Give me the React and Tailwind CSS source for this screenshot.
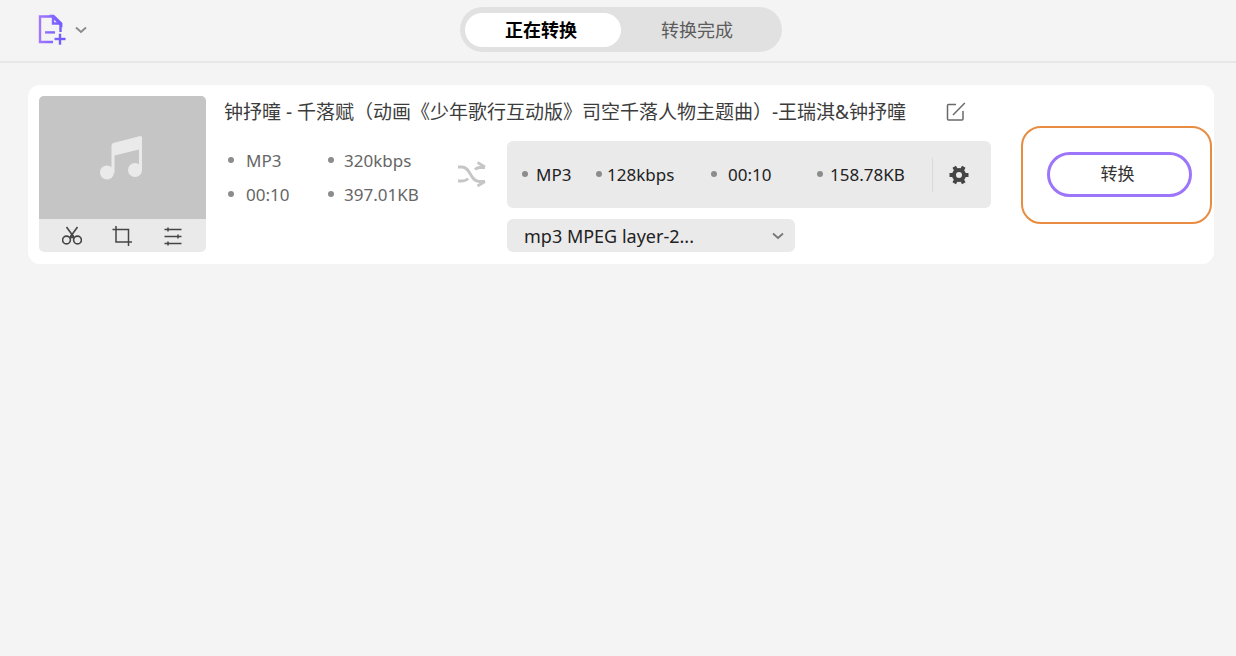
import React, { useState } from 'react';
import clsx from 'clsx';

const tabs = ['正在转换', '转换完成'];

const source = [
  { value: 'MP3', gap: 'gap-3' },
  { value: '320kbps', gap: 'gap-[10px]' },
  { value: '00:10', gap: 'gap-3' },
  { value: '397.01KB', gap: 'gap-[10px]' },
];

const target = [
  { value: 'MP3', gap: 'gap-2' },
  { value: '128kbps', gap: 'gap-[5px]' },
  { value: '00:10', gap: 'gap-[11px]' },
  { value: '158.78KB', gap: 'gap-[7px]' },
];

const App = () => {
  const [activeTab, setActiveTab] = useState(tabs[0]);

  return (
    <div className="min-h-screen bg-[#f4f4f4] font-['Noto_Sans','Noto_Sans_CJK_SC',sans-serif]">
      {/* Top bar */}
      <header className="grid h-[63px] grid-cols-[1fr_auto_1fr] items-start border-b-2 border-[#e7e7e7] px-[38px]">
        <button type="button" aria-label="添加文件" className="mt-[14px] flex items-center gap-2 justify-self-start">
          <AddFileIcon />
          <ChevronIcon className="text-[#8a8a8a]" />
        </button>
        <nav className="mt-[7px] ml-[6px] flex h-[45px] items-center rounded-full bg-[#e1e1e1] px-[5px]">
          {tabs.map((tab) => (
            <button
              key={tab}
              type="button"
              onClick={() => setActiveTab(tab)}
              className={clsx(
                'h-[34px] w-[156px] rounded-full pr-1 text-lg leading-[34px]',
                tab === activeTab ? 'bg-white font-bold text-black' : 'text-[#5c5c5c]'
              )}
            >
              {tab}
            </button>
          ))}
        </nav>
      </header>

      {/* File list */}
      <main className="pt-[22px] pr-[22px] pl-7">
        <article className="flex items-start rounded-xl bg-white pt-[11px] pr-[2px] pb-3 pl-[11px]">
          <div className="w-[167px] shrink-0 overflow-hidden rounded-[5px] bg-[#eaeaea]">
            <div className="flex h-[123px] items-center justify-center bg-[#c5c5c5] pr-1">
              <MusicIcon />
            </div>
            <div className="flex h-[33px] items-center justify-around px-2 text-[#454545]">
              <button type="button" aria-label="剪切"><CutIcon /></button>
              <button type="button" aria-label="裁剪"><CropIcon /></button>
              <button type="button" aria-label="效果"><AdjustIcon /></button>
            </div>
          </div>

          <div className="ml-[18px] min-w-0 flex-1">
            <div className="flex h-8 items-center gap-10 text-[#3c3c3c]">
              <h2 className="text-[19px] leading-8 whitespace-nowrap">
                钟抒曈 - 千落赋（动画《少年歌行互动版》司空千落人物主题曲）-王瑞淇&amp;钟抒曈
              </h2>
              <button type="button" aria-label="重命名"><EditIcon /></button>
            </div>

            <div className="mt-[13px] flex h-[67px] items-start">
              <ul className="mt-[3px] grid w-[233px] shrink-0 grid-cols-[100px_1fr] pl-1 text-[17px] leading-[34px] text-[#666]">
                {source.map((item) => (
                  <Stat key={item.value} {...item} />
                ))}
              </ul>
              <ShuffleIcon />
              <div className="ml-5 flex h-[67px] flex-1 items-center rounded-md bg-[#eaeaea] pl-[15px]">
                <ul className="grid flex-1 grid-cols-[74fr_115fr_106fr_115fr] text-[17px] leading-[34px] text-[#222]">
                  {target.map((item) => (
                    <Stat key={item.value} {...item} />
                  ))}
                </ul>
                <button
                  type="button"
                  aria-label="设置"
                  className="flex h-[34px] w-[59px] items-center border-l border-[#d9d9d9] pl-4 text-[#444]"
                >
                  <GearIcon />
                </button>
              </div>
            </div>

            <div className="mt-[11px] ml-[283px] grid w-[288px] items-center rounded-md bg-[#eaeaea]">
              <select
                aria-label="输出格式"
                className="col-start-1 row-start-1 h-[33px] appearance-none bg-transparent pl-[17px] text-lg text-[#222]"
              >
                <option>mp3 MPEG layer-2...</option>
              </select>
              <ChevronIcon className="pointer-events-none col-start-1 row-start-1 mr-[11px] justify-self-end text-[#777]" />
            </div>
          </div>

          <div className="mt-[30px] ml-[30px] flex h-[98px] w-[191px] shrink-0 items-center rounded-[20px] border-2 border-[#e88c42] pb-[2px] pl-6">
            <button
              type="button"
              className="h-[45px] w-[145px] rounded-full border-3 border-[#9d75fb] pr-1 text-[17px] text-[#333]"
            >
              转换
            </button>
          </div>
        </article>
      </main>
    </div>
  );
};

const Stat = ({ value, gap }) => (
  <li className={clsx('flex', gap)}>
    <span className="mt-[13px] h-[6px] w-[6px] shrink-0 rounded-full bg-[#8c8c8c]" />
    <span>{value}</span>
  </li>
);

const AddFileIcon = () => (
  <svg width="29" height="32" viewBox="0 0 29 32" fill="none" stroke="url(#file-stroke)" strokeWidth="2.4">
    <defs>
      <linearGradient id="file-stroke" gradientUnits="userSpaceOnUse" x1="0" y1="0" x2="28" y2="0">
        <stop offset="0" stopColor="#a678ff" />
        <stop offset="1" stopColor="#6658ff" />
      </linearGradient>
    </defs>
    <path d="M15 28H2V2.5H15L22.500 10V18" />
    <path d="M15 2.5V9.5H22.5" />
    <path d="M14 2L23.200 11V9.500L15.500 2Z" />
    <path d="M7 18.400H17" />
    <path d="M16.500 25H27.500" />
    <path d="M22 19.700V30.700" />
  </svg>
);

const ChevronIcon = ({ className }) => (
  <svg className={className} width="12" height="8" viewBox="0 0 12 8" fill="none" stroke="currentColor" strokeWidth="1.8">
    <path d="M1 1.5L6 6L11 1.5" />
  </svg>
);

const MusicIcon = () => (
  <svg width="44" height="46" viewBox="0 0 44 46" fill="#eaeaea">
    <path d="M12.5 10.5Q12.5 8.6 14.3 8L40.5 1.2Q43 0.7 43 3V35H40V14.500L15.500 20.500V38H12.500Z" />
    <circle cx="8" cy="37.5" r="7" />
    <circle cx="36" cy="35" r="7" />
  </svg>
);

const CutIcon = () => (
  <svg width="20" height="20" viewBox="0 0 20 20" fill="none" stroke="currentColor" strokeWidth="1.6">
    <path d="M4.500 1L12.500 12" />
    <path d="M15.500 1L7.500 12" />
    <circle cx="4.500" cy="14" r="3.900" />
    <circle cx="15.500" cy="14" r="3.900" />
    <circle cx="10" cy="10.500" r="1.200" />
  </svg>
);

const CropIcon = () => (
  <svg width="20" height="20" viewBox="0 0 20 20" fill="none" stroke="currentColor" strokeWidth="1.5">
    <path d="M4 0V16H20" />
    <path d="M0.5 3.5H16.5V20" />
  </svg>
);

const AdjustIcon = () => (
  <svg width="20" height="20" viewBox="0 0 20 20" fill="none" stroke="currentColor" strokeWidth="1.5">
    <path d="M1.5 3.5H18.5M1.5 10.5H18.5M1.5 17.5H18.5" />
    <path d="M5 1.5V5.5M15 8.5V12.5M5 15.5V19.5" />
  </svg>
);

const EditIcon = () => (
  <svg width="20" height="20" viewBox="0 0 20 20" fill="none" stroke="#6a6a6a" strokeWidth="1.5">
    <path d="M10 2.5H2.5Q1.5 2.5 1.5 3.5V17Q1.5 18 2.5 18H16Q17 18 17 17V9" />
    <path d="M7 13L18.8 1" />
  </svg>
);

const ShuffleIcon = () => (
  <svg className="mt-[19px] shrink-0" width="30" height="28" viewBox="0 0 30 28" fill="none" stroke="#c6c6c6" strokeWidth="2.8">
    <path d="M1 7H5C14 7 13 21.500 22 21.500H28" />
    <path d="M1 21H5Q9 21 11 18.500" />
    <path d="M18 9.500Q20 7.500 23 7.500H28" />
    <path d="M20.5 2.5L28 7M20.5 26L28 21.500" />
  </svg>
);

const GearIcon = () => (
  <svg width="20" height="20" viewBox="0 0 20 20" fill="none" stroke="currentColor">
    <circle cx="10" cy="10" r="5" strokeWidth="4" />
    <path
      d="M0.5 10H4M16 10H19.5M5.2 1.8L7 5M13 15L14.8 18.2M14.8 1.8L13 5M7 15L5.2 18.2"
      strokeWidth="4"
    />
  </svg>
);

export default App;
